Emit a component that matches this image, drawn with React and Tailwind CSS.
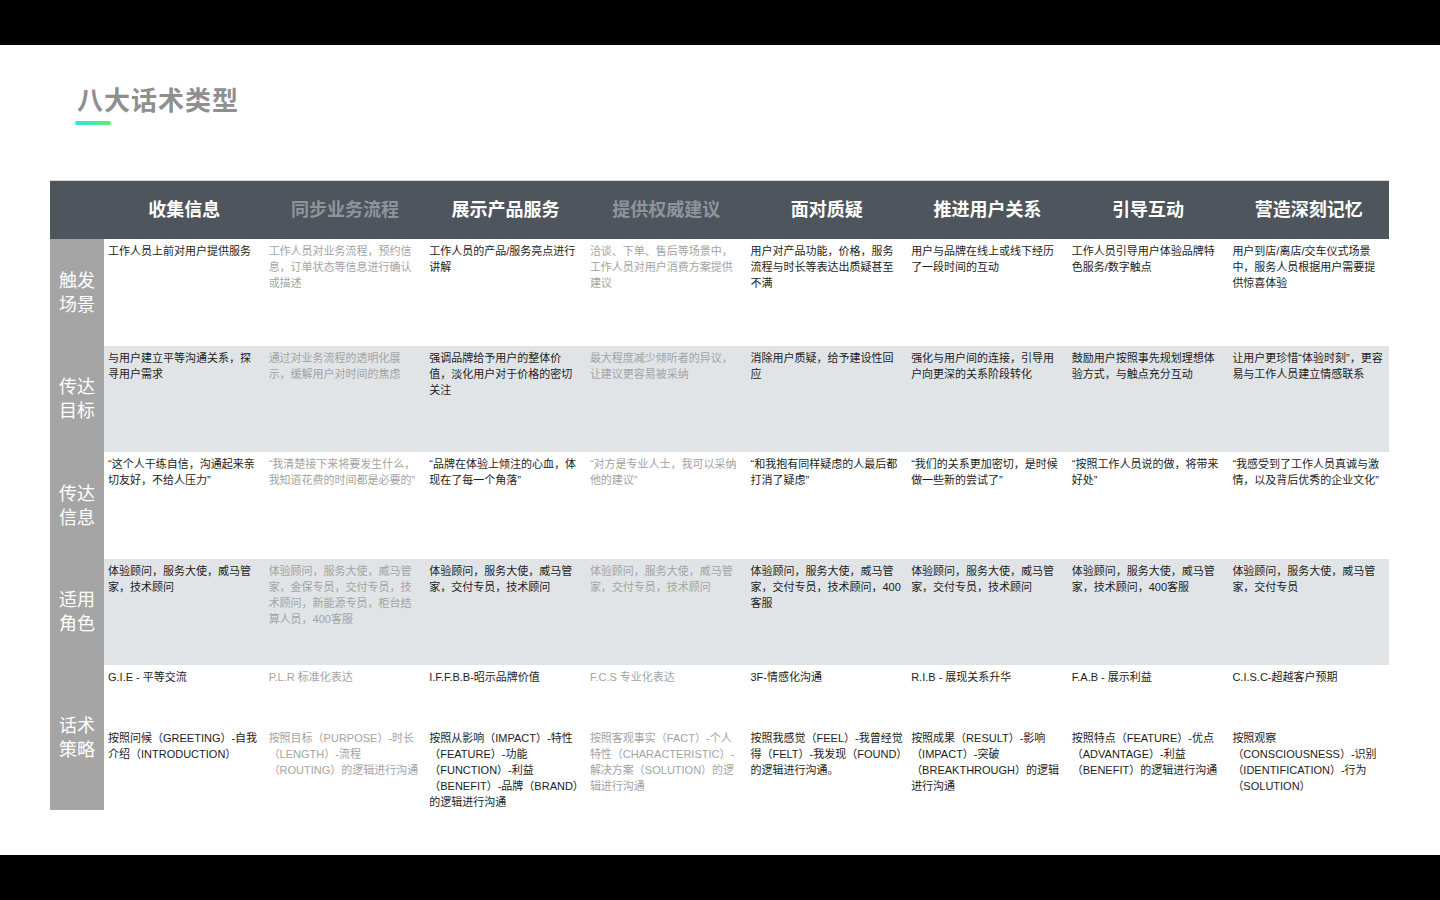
import React from 'react';

const heads = ['收集信息', '同步业务流程', '展示产品服务', '提供权威建议', '面对质疑', '推进用户关系', '引导互动', '营造深刻记忆'];

const rows = [
  {
    label: ['触发', '场景'], h: 'h-[107px]', bg: 'bg-white',
    cells: [
      '工作人员上前对用户提供服务',
      '工作人员对业务流程，预约信息，订单状态等信息进行确认或描述',
      '工作人员的产品/服务亮点进行讲解',
      '洽谈、下单、售后等场景中，工作人员对用户消费方案提供建议',
      '用户对产品功能，价格，服务流程与时长等表达出质疑甚至不满',
      '用户与品牌在线上或线下经历了一段时间的互动',
      '工作人员引导用户体验品牌特色服务/数字触点',
      '用户到店/离店/交车仪式场景中，服务人员根据用户需要提供惊喜体验',
    ],
  },
  {
    label: ['传达', '目标'], h: 'h-[106px]', bg: 'bg-[#e1e4e7]',
    cells: [
      '与用户建立平等沟通关系，探寻用户需求',
      '通过对业务流程的透明化展示，缓解用户对时间的焦虑',
      '强调品牌给予用户的整体价值，淡化用户对于价格的密切关注',
      '最大程度减少倾听者的异议，让建议更容易被采纳',
      '消除用户质疑，给予建设性回应',
      '强化与用户间的连接，引导用户向更深的关系阶段转化',
      '鼓励用户按照事先规划理想体验方式，与触点充分互动',
      '让用户更珍惜“体验时刻”，更容易与工作人员建立情感联系',
    ],
  },
  {
    label: ['传达', '信息'], h: 'h-[107px]', bg: 'bg-white',
    cells: [
      '“这个人干练自信，沟通起来亲切友好，不给人压力”',
      '“我清楚接下来将要发生什么，我知道花费的时间都是必要的”',
      '“品牌在体验上倾注的心血，体现在了每一个角落”',
      '“对方是专业人士，我可以采纳他的建议”',
      '“和我抱有同样疑虑的人最后都打消了疑虑”',
      '“我们的关系更加密切，是时候做一些新的尝试了”',
      '“按照工作人员说的做，将带来好处”',
      '“我感受到了工作人员真诚与激情，以及背后优秀的企业文化”',
    ],
  },
  {
    label: ['适用', '角色'], h: 'h-[106px]', bg: 'bg-[#e1e4e7]',
    cells: [
      '体验顾问，服务大使，威马管家，技术顾问',
      '体验顾问，服务大使，威马管家，金保专员，交付专员，技术顾问，新能源专员，柜台结算人员，400客服',
      '体验顾问，服务大使，威马管家，交付专员，技术顾问',
      '体验顾问，服务大使，威马管家，交付专员，技术顾问',
      '体验顾问，服务大使，威马管家，交付专员，技术顾问，400客服',
      '体验顾问，服务大使，威马管家，交付专员，技术顾问',
      '体验顾问，服务大使，威马管家，技术顾问，400客服',
      '体验顾问，服务大使，威马管家，交付专员',
    ],
  },
];

const strategy = [
  ['G.I.E - 平等交流', '按照问候（GREETING）-自我介绍（INTRODUCTION）'],
  ['P.L.R 标准化表达', '按照目标（PURPOSE）-时长（LENGTH）-流程（ROUTING）的逻辑进行沟通'],
  ['I.F.F.B.B-昭示品牌价值', '按照从影响（IMPACT）-特性（FEATURE）-功能（FUNCTION）-利益（BENEFIT）-品牌（BRAND）的逻辑进行沟通'],
  ['F.C.S 专业化表达', '按照客观事实（FACT）-个人特性（CHARACTERISTIC）-解决方案（SOLUTION）的逻辑进行沟通'],
  ['3F-情感化沟通', '按照我感觉（FEEL）-我曾经觉得（FELT）-我发现（FOUND）的逻辑进行沟通。'],
  ['R.I.B - 展现关系升华', '按照成果（RESULT）-影响（IMPACT）-突破（BREAKTHROUGH）的逻辑进行沟通'],
  ['F.A.B - 展示利益', '按照特点（FEATURE）-优点（ADVANTAGE）-利益（BENEFIT）的逻辑进行沟通'],
  ['C.I.S.C-超越客户预期', '按照观察（CONSCIOUSNESS）-识别（IDENTIFICATION）-行为（SOLUTION）'],
];

const cellText = i => (i === 1 || i === 3 ? 'text-[#a3a3a3]' : 'text-[#1c1c1c]');
const font = { fontFamily: '"Liberation Sans", "Noto Sans CJK SC", sans-serif' };

function Label({ lines }) {
  return (
    <div className="bg-[#a5a5a5] flex flex-col justify-center pl-[9px] text-white text-[18px] leading-[24px]">
      {lines.map(l => <div key={l}>{l}</div>)}
    </div>
  );
}

export default function App() {
  return (
    <div className="w-[1440px] h-[900px] bg-black flex flex-col" style={font}>
      <div className="h-[45px]" />
      <div className="flex-1 bg-white px-[50px] pr-[51px]">
        <div className="pt-[40px] pl-[27px] pb-[55px]">
          <h1 className="text-[26px] font-bold text-[#8f8f8f] leading-[32px] tracking-[1px]">八大话术类型</h1>
          <div className="mt-[4px] -ml-[2px] w-[36px] h-[4px] rounded-full bg-gradient-to-r from-[#2de0e8] to-[#5cf05a]" />
        </div>
        <div className="border-t border-[#d4d6d8]">
          <div className="grid grid-cols-[54px_repeat(8,1fr)] h-[58px] bg-[#4f555d] items-center">
            <div />
            {heads.map((h, i) => (
              <div key={h} className={`text-center text-[18px] font-bold ${i === 1 || i === 3 ? 'text-[#8f949b]' : 'text-white'}`}>{h}</div>
            ))}
          </div>
          {rows.map(r => (
            <div key={r.label[0] + r.label[1]} className={`grid grid-cols-[54px_repeat(8,1fr)] ${r.h} ${r.bg}`}>
              <Label lines={r.label} />
              {r.cells.map((c, i) => (
                <div key={i} className={`px-[4px] pt-[4px] text-[11px] leading-[16px] ${cellText(i)}`}>{c}</div>
              ))}
            </div>
          ))}
          <div className="grid grid-cols-[54px_repeat(8,1fr)] h-[142px] bg-white">
            <Label lines={['话术', '策略']} />
            {strategy.map(([a, b], i) => (
              <div key={i} className={`px-[4px] pt-[4px] text-[11px] leading-[16px] ${cellText(i)}`}>
                <div>{a}</div>
                <div className="mt-[45px]">{b}</div>
              </div>
            ))}
          </div>
        </div>
      </div>
      <div className="h-[45px]" />
    </div>
  );
}
